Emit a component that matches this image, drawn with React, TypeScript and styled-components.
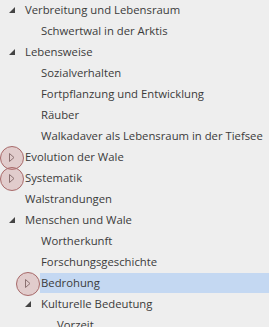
import React from 'react';
import styled, { createGlobalStyle } from 'styled-components';

type Toggle = 'open' | 'closed' | 'none';

interface Node {
    label: string;
    level: number;
    toggle: Toggle;
    marked?: boolean;
    selected?: boolean;
}

const nodes: Node[] = [
    { label: 'Verbreitung und Lebensraum', level: 0, toggle: 'open' },
    { label: 'Schwertwal in der Arktis', level: 1, toggle: 'none' },
    { label: 'Lebensweise', level: 0, toggle: 'open' },
    { label: 'Sozialverhalten', level: 1, toggle: 'none' },
    { label: 'Fortpflanzung und Entwicklung', level: 1, toggle: 'none' },
    { label: 'Räuber', level: 1, toggle: 'none' },
    { label: 'Walkadaver als Lebensraum in der Tiefsee', level: 1, toggle: 'none' },
    { label: 'Evolution der Wale', level: 0, toggle: 'closed', marked: true },
    { label: 'Systematik', level: 0, toggle: 'closed', marked: true },
    { label: 'Walstrandungen', level: 0, toggle: 'none' },
    { label: 'Menschen und Wale', level: 0, toggle: 'open' },
    { label: 'Wortherkunft', level: 1, toggle: 'none' },
    { label: 'Forschungsgeschichte', level: 1, toggle: 'none' },
    { label: 'Bedrohung', level: 1, toggle: 'closed', marked: true, selected: true },
    { label: 'Kulturelle Bedeutung', level: 1, toggle: 'open' },
    { label: 'Vorzeit', level: 2, toggle: 'none' },
];

const INDENT = 16;

const Global = createGlobalStyle`
    html, body {
        margin: 0;
        padding: 0;
        background: #eeeeee;
        overflow: hidden;
    }
`;

const Tree = styled.ul`
    list-style: none;
    margin: 0;
    padding: 0;
    width: 269px;
    height: 327px;
    overflow: hidden;
    background: #eeeeee;
    font-family: 'Open Sans', 'Noto Sans', sans-serif;
    font-size: 11.3px;
    color: #3b3b3b;
`;

const Row = styled.li<{ $level: number }>`
    position: relative;
    display: flex;
    align-items: center;
    height: 21px;
    padding-left: ${({ $level }) => 7 + $level * INDENT}px;
    white-space: nowrap;
`;

const Expander = styled.span`
    position: relative;
    display: flex;
    align-items: center;
    justify-content: center;
    width: 10px;
    height: 21px;
    margin-right: 8px;
    flex-shrink: 0;
`;

const Marker = styled.span`
    position: absolute;
    left: 50%;
    top: 50%;
    width: 22px;
    height: 22px;
    margin: -12px 0 0 -12px;
    border: 1px solid #a86a6a;
    border-radius: 50%;
    background: rgba(200, 140, 140, 0.35);
`;

const Label = styled.span<{ $selected: boolean }>`
    flex: 1;
    height: 20px;
    line-height: 20px;
    margin-bottom: 1px;
    margin-left: -1px;
    padding-left: 1px;
    background: ${({ $selected }) => ($selected ? '#c4d8f2' : 'transparent')};
`;

const OpenIcon = () => (
    <svg width="6" height="6" viewBox="0 0 6 6" style={{ marginTop: -1 }}>
        <polygon points="6,0 6,6 0,6" fill="#444444" />
    </svg>
);

const ClosedIcon = () => (
    <svg width="6" height="9" viewBox="0 0 6 9" style={{ position: 'relative' }}>
        <polygon points="0.5,0.5 5,4.5 0.5,8.5" fill="none" stroke="#8a7070" strokeWidth="1" />
    </svg>
);

const App: React.FC = () => (
    <>
        <Global />
        <Tree>
            {nodes.map((node) => (
                <Row key={node.label} $level={node.level}>
                    <Expander>
                        {node.marked && <Marker />}
                        {node.toggle === 'open' && <OpenIcon />}
                        {node.toggle === 'closed' && <ClosedIcon />}
                    </Expander>
                    <Label $selected={!!node.selected}>{node.label}</Label>
                </Row>
            ))}
        </Tree>
    </>
);

export default App;
